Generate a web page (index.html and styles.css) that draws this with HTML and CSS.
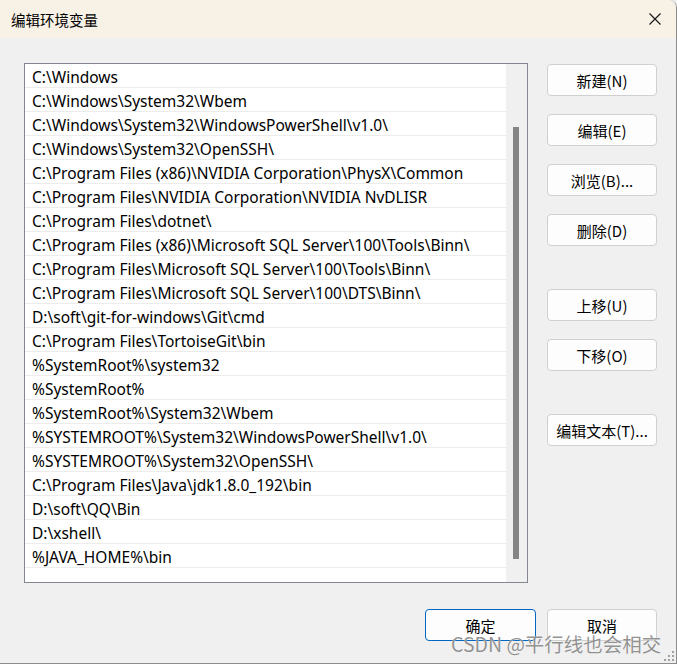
FILE: index.html
```html
<!DOCTYPE html>
<html lang="zh-CN">
<head>
    <meta charset="UTF-8">
    <title>编辑环境变量</title>
    <link rel="stylesheet" href="styles.css">
</head>
<body>
    <div class="window">
        <div class="titlebar">
            <span class="title">编辑环境变量</span>
            <svg class="close" width="12" height="12" viewBox="0 0 12 12">
                <path d="M0.5 0.5 L11.5 11.5 M11.5 0.5 L0.5 11.5" stroke="#1a1a1a" stroke-width="1.2" fill="none"/>
            </svg>
        </div>
        <div class="content">
            <div class="listbox">
                <ul class="rows">
                    <li>C:\Windows</li>
                    <li>C:\Windows\System32\Wbem</li>
                    <li>C:\Windows\System32\WindowsPowerShell\v1.0\</li>
                    <li>C:\Windows\System32\OpenSSH\</li>
                    <li>C:\Program Files (x86)\NVIDIA Corporation\PhysX\Common</li>
                    <li>C:\Program Files\NVIDIA Corporation\NVIDIA NvDLISR</li>
                    <li>C:\Program Files\dotnet\</li>
                    <li>C:\Program Files (x86)\Microsoft SQL Server\100\Tools\Binn\</li>
                    <li>C:\Program Files\Microsoft SQL Server\100\Tools\Binn\</li>
                    <li>C:\Program Files\Microsoft SQL Server\100\DTS\Binn\</li>
                    <li>D:\soft\git-for-windows\Git\cmd</li>
                    <li>C:\Program Files\TortoiseGit\bin</li>
                    <li>%SystemRoot%\system32</li>
                    <li>%SystemRoot%</li>
                    <li>%SystemRoot%\System32\Wbem</li>
                    <li>%SYSTEMROOT%\System32\WindowsPowerShell\v1.0\</li>
                    <li>%SYSTEMROOT%\System32\OpenSSH\</li>
                    <li>C:\Program Files\Java\jdk1.8.0_192\bin</li>
                    <li>D:\soft\QQ\Bin</li>
                    <li>D:\xshell\</li>
                    <li>%JAVA_HOME%\bin</li>
                </ul>
                <div class="scrollbar"><div class="thumb"></div></div>
            </div>
            <div class="side">
                <button class="btn">新建(N)</button>
                <button class="btn">编辑(E)</button>
                <button class="btn">浏览(B)...</button>
                <button class="btn">删除(D)</button>
                <button class="btn group">上移(U)</button>
                <button class="btn">下移(O)</button>
                <button class="btn group">编辑文本(T)...</button>
            </div>
        </div>
        <div class="footer">
            <button class="btn primary">确定</button>
            <button class="btn">取消</button>
        </div>
        <div class="watermark">CSDN @平行线也会相交</div>
        <svg class="grip" width="10" height="10" viewBox="0 0 10 10">
            <rect x="8" y="0" width="2" height="2" fill="#a0a0a0"/>
            <rect x="4" y="4" width="2" height="2" fill="#a0a0a0"/>
            <rect x="8" y="4" width="2" height="2" fill="#a0a0a0"/>
            <rect x="0" y="8" width="2" height="2" fill="#a0a0a0"/>
            <rect x="4" y="8" width="2" height="2" fill="#a0a0a0"/>
            <rect x="8" y="8" width="2" height="2" fill="#a0a0a0"/>
        </svg>
    </div>
</body>
</html>
```

FILE: styles.css
```css
*{
    box-sizing: border-box;
}
body{
    margin: 0;
    background: #f0f0f0;
    font-family: "Noto Sans", "Noto Sans CJK SC", sans-serif;
    color: #000;
}
.window{
    position: relative;
    width: 677px;
    height: 664px;
    background: #f0f0f0;
    border-right: 1px solid #8c8c8c;
    border-bottom: 1px solid #8c8c8c;
    border-top-right-radius: 8px;
    overflow: hidden;
}
.titlebar{
    height: 38px;
    background: #f8f1e5;
    display: flex;
    align-items: center;
    justify-content: space-between;
    padding: 0 15px 0 11px;
}
.title{
    font-size: 14.5px;
    font-family: "Noto Sans CJK SC", sans-serif;
}
.close{
    display: block;
}
.content{
    display: flex;
    padding: 25px 0 0 24px;
}
.listbox{
    width: 504px;
    height: 520px;
    border: 1px solid #828790;
    background: #fff;
    display: flex;
}
.rows{
    list-style: none;
    margin: 0;
    padding: 0;
    width: 481px;
}
.rows li{
    height: 24px;
    line-height: 25px;
    padding-top: 1px;
    border-bottom: 1px solid #ececec;
    padding-left: 7px;
    font-size: 15.5px;
    white-space: nowrap;
    color: #000;
}
.scrollbar{
    width: 21px;
    background: #f0f0f0;
    padding-top: 63px;
}
.thumb{
    width: 6px;
    height: 432px;
    margin-left: 7px;
    background: #858585;
}
.side{
    display: flex;
    flex-direction: column;
    gap: 18px;
    margin-left: 19px;
    padding-top: 1px;
}
.btn{
    width: 110px;
    height: 32px;
    border: 1px solid #d0d0d0;
    border-radius: 4px;
    background: #fdfdfd;
    font-family: "Noto Sans CJK SC", sans-serif;
    font-size: 15px;
    color: #000;
    padding: 0;
}
.side .group{
    margin-top: 25px;
}
.footer{
    display: flex;
    justify-content: flex-end;
    gap: 11px;
    padding: 26px 19px 0 0;
}
.footer .primary{
    width: 111px;
    border: 1px solid #0067c0;
}
.watermark{
    position: absolute;
    left: 451px;
    top: 629px;
    font-size: 19.5px;
    font-family: "Noto Sans CJK SC", sans-serif;
    color: rgba(110, 110, 110, 0.75);
    text-shadow: 0 0 1px #fff;
    white-space: nowrap;
}
.grip{
    position: absolute;
    right: 2px;
    bottom: 2px;
}
```
